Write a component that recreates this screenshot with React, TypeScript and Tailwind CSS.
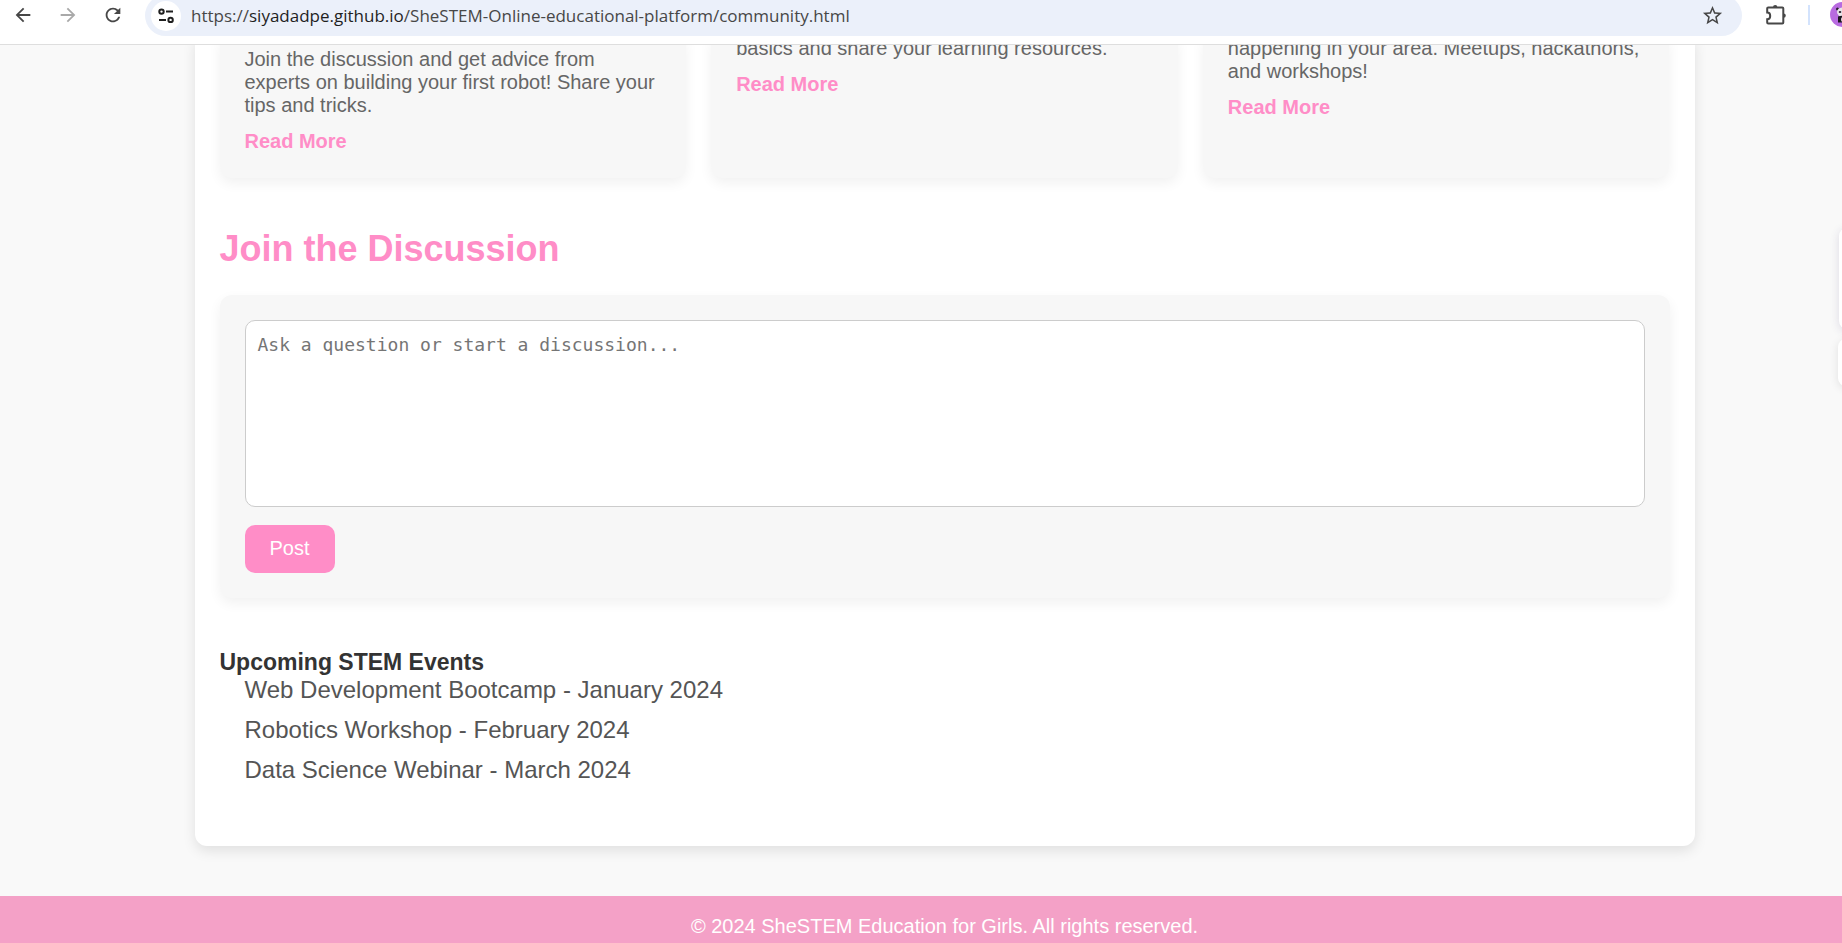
import { MdArrowBack, MdArrowForward, MdRefresh, MdStarBorder } from "react-icons/md";

const topics = [
  {
    text: "Join the discussion and get advice from experts on building your first robot! Share your tips and tricks.",
    spacing: "pt-[11px]",
  },
  { text: "basics and share your learning resources.", spacing: "pt-0" },
  { text: "happening in your area. Meetups, hackathons, and workshops!", spacing: "pt-0" },
];

const events = [
  "Web Development Bootcamp - January 2024",
  "Robotics Workshop - February 2024",
  "Data Science Webinar - March 2024",
];

function TuneIcon() {
  return (
    <svg width="16" height="16" viewBox="0 0 16 16" fill="none" stroke="#1f1f1f" strokeWidth="2">
      <circle cx="3.5" cy="3.6" r="2.2" />
      <path d="M8 3.6h7M1 11.9h7" />
      <circle cx="12.6" cy="11.9" r="2.2" />
    </svg>
  );
}

function PuzzleIcon() {
  return (
    <svg width="22" height="22" viewBox="0 0 22 22" fill="none">
      <path
        d="M3.2 3.5h14.1a1 1 0 0 1 1 1v14.1a1 1 0 0 1-1 1H3.2a1 1 0 0 1-1-1v-3.4c1.9 0 3-1.4 3-3.2S4.1 8.6 2.2 8.6V4.5a1 1 0 0 1 1-1z"
        stroke="#474747"
        strokeWidth="2"
      />
      <path d="M8 3.2a2.2 2.2 0 0 1 4.4 0zM18.6 9.4a2.2 2.2 0 0 1 0 4.400z" fill="#474747" />
    </svg>
  );
}

function Avatar() {
  return (
    <svg width="25" height="25" viewBox="0 0 25 25">
      <circle cx="12.5" cy="12.5" r="12.5" fill="#b86be0" />
      <circle cx="7.5" cy="7" r="1.5" fill="#2b2230" />
      <ellipse cx="12.5" cy="10" rx="5.5" ry="4.5" fill="#e9e6ea" />
      <ellipse cx="10" cy="10" rx="1.3" ry="1.1" fill="#2b2230" />
      <path d="M8 14.5q4.5-1.5 9 0v6H8z" fill="#1c1720" />
      <ellipse cx="13" cy="17.5" rx="2" ry="2.5" fill="#d9d3dc" />
    </svg>
  );
}

function Toolbar() {
  return (
    <header className="relative z-10 flex h-[45px] shrink-0 items-start overflow-hidden border-b border-[#dedede] bg-white">
      <nav className="flex h-[29px] shrink-0 items-center gap-[23px] pl-3 pr-[21px]" aria-label="Browser">
        <button aria-label="Back" className="text-[#474747]"><MdArrowBack size={22} /></button>
        <button aria-label="Forward" className="text-[#a9a9a9]"><MdArrowForward size={22} /></button>
        <button aria-label="Reload" className="text-[#474747]"><MdRefresh size={22} /></button>
      </nav>
      <div className="-mt-[5px] flex h-[41px] flex-1 items-center rounded-full bg-[#ebf0fa] pl-[6px] pr-[18px]">
        <button aria-label="Site information" className="flex size-[30px] shrink-0 items-center justify-center rounded-full bg-white">
          <TuneIcon />
        </button>
        <p className="ml-[10px] flex-1 whitespace-nowrap font-['Open_Sans',sans-serif] text-[17px] leading-6 text-[#474747]">
          https://<span className="text-[#1f1f1f]">siyadadpe.github.io</span>/SheSTEM-Online-educational-platform/community.html
        </p>
        <button aria-label="Bookmark" className="text-[#474747]"><MdStarBorder size={23} /></button>
      </div>
      <div className="flex h-[29px] shrink-0 items-center pl-[23px]">
        <button aria-label="Extensions"><PuzzleIcon /></button>
        <span className="ml-[21px] h-5 w-[2px] bg-[#d3e3fd]" />
        <button aria-label="Profile" className="-mr-[13px] ml-5"><Avatar /></button>
      </div>
    </header>
  );
}

export default function App() {
  return (
    <div className="relative flex h-screen flex-col overflow-hidden bg-[#f9f9f9] font-['Liberation_Sans',Arial,sans-serif] text-xl leading-[23px]">
      <Toolbar />
      <div className="-mt-2 w-[calc(100%+47px)] shrink-0">
        <main className="mx-auto w-full max-w-[1500px] rounded-b-xl bg-white px-[25px] pb-[50px] shadow-[0_5px_13px_rgba(0,0,0,0.1)]">
          <section className="grid grid-cols-3 gap-[25px]">
            {topics.map((topic) => (
              <article
                key={topic.text}
                className={`rounded-b-xl bg-[#f7f7f7] px-[25px] pb-[25px] shadow-[0_5px_13px_rgba(0,0,0,0.06)] ${topic.spacing}`}
              >
                <p className="text-[#666666]">{topic.text}</p>
                <a href="#topic" className="mt-[13px] block font-bold text-[#ff8dc7]">Read More</a>
              </article>
            ))}
          </section>

          <section className="mt-[50px]">
            <h2 className="text-4xl leading-[42px] font-bold text-[#ff8dc7]">Join the Discussion</h2>
            <form className="mt-[25px] rounded-xl bg-[#f7f7f7] p-[25px] shadow-[0_5px_13px_rgba(0,0,0,0.06)]">
              <textarea
                aria-label="Discussion"
                placeholder="Ask a question or start a discussion..."
                className="block h-[187px] w-full resize-none rounded-[10px] border border-[#cccccc] bg-white p-3 font-['DejaVu_Sans_Mono',monospace] text-lg leading-[23px] placeholder:text-[#757575]"
              />
              <button type="button" className="mt-[18px] block h-12 rounded-[10px] bg-[#ff8dc7] px-[25px] pb-[2px] text-white">
                Post
              </button>
            </form>
          </section>

          <section className="mt-[50px] leading-7">
            <h3 className="text-[23px] font-bold text-[#333333]">Upcoming STEM Events</h3>
            <ul className="pl-[25px] text-2xl leading-7 text-[#555555]">
              {events.map((event) => (
                <li key={event} className="pb-3">{event}</li>
              ))}
            </ul>
          </section>
        </main>
        <footer className="mt-[50px] bg-[#f4a1c7] px-6 pt-[19px] pb-[25px] text-center text-white">
          © 2024 SheSTEM Education for Girls. All rights reserved.
        </footer>
      </div>
      <aside className="absolute top-[228px] -right-9 flex flex-col items-end gap-[10px]">
        <div className="h-[101px] w-[39px] rounded-lg bg-white shadow-[0_2px_10px_rgba(60,50,110,0.15)]" />
        <div className="h-[47px] w-10 rounded-lg bg-white shadow-[0_2px_10px_rgba(0,0,0,0.1)]" />
      </aside>
    </div>
  );
}
